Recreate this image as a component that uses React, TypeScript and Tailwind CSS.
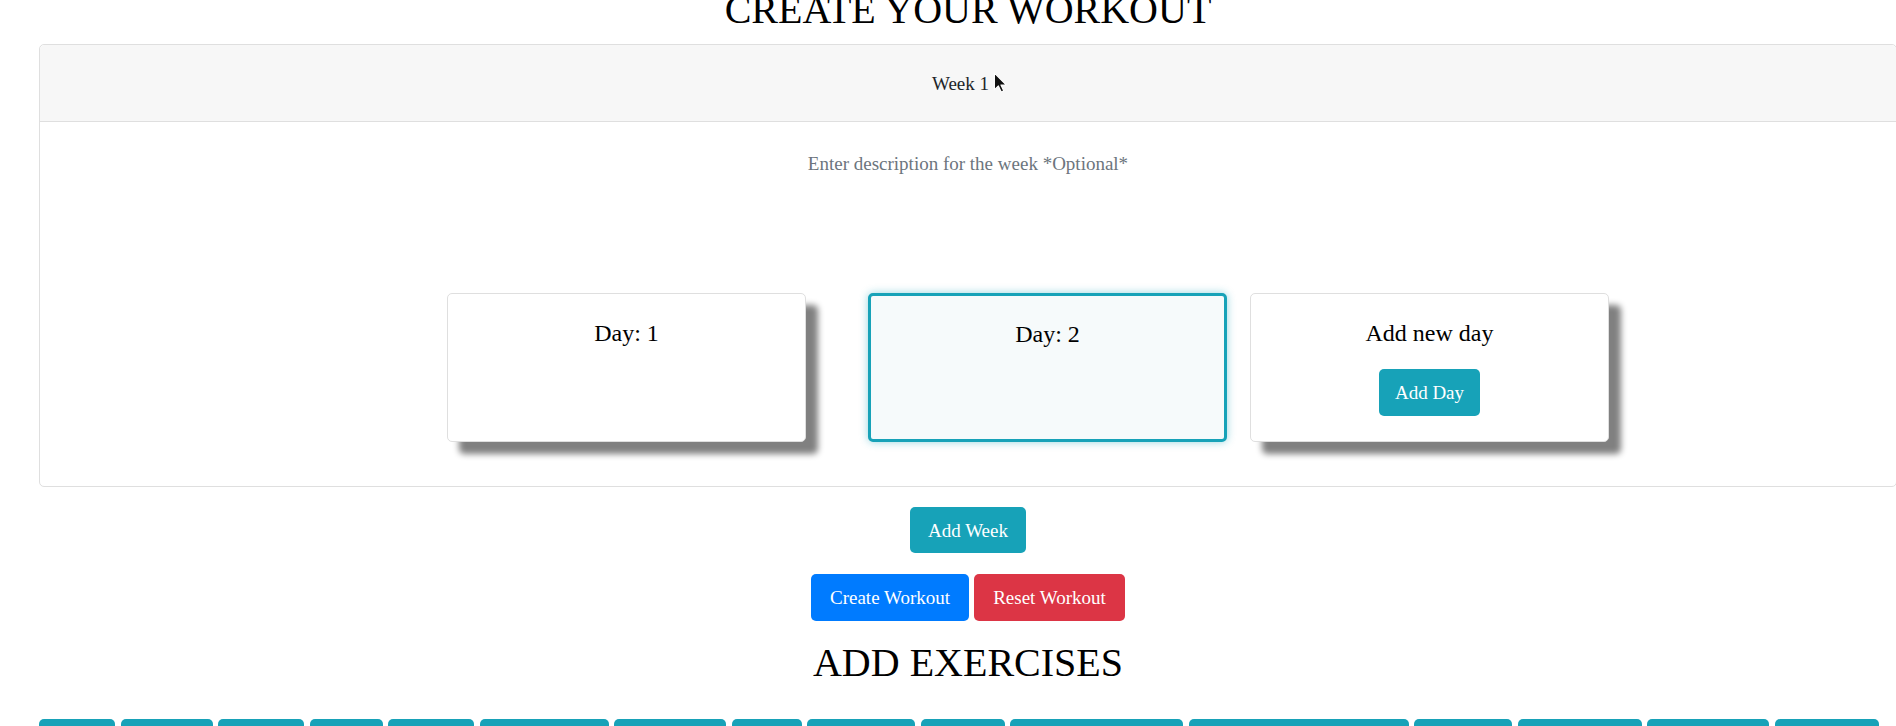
const exercises = [
  { label: "Chest", w: "w-[76px]" },
  { label: "Biceps", w: "w-[92px]" },
  { label: "Triceps", w: "w-[86px]" },
  { label: "Back", w: "w-[73px]" },
  { label: "Legs", w: "w-[86px]" },
  { label: "Shoulders", w: "w-[129px]" },
  { label: "Forearms", w: "w-[112px]" },
  { label: "Abs", w: "w-[70px]" },
  { label: "Glutes", w: "w-[108px]" },
  { label: "Calves", w: "w-[84px]" },
  { label: "Lower Back", w: "w-[173px]" },
  { label: "Cardio Exercises", w: "w-[220px]" },
  { label: "Traps", w: "w-[98px]" },
  { label: "Hamstrings", w: "w-[124px]" },
  { label: "Quadriceps", w: "w-[122px]" },
  { label: "Obliques", w: "w-[104px]" },
];

const Cursor = () => (
  <svg
    width="15"
    height="21"
    viewBox="0 0 13 19"
    className="absolute left-full top-[3px] ml-[4px]"
  >
    <path
      d="M1 1 L1 16 L4.6 12.6 L7.2 18 L9.4 17 L6.9 11.7 L11.6 11.7 Z"
      fill="#111"
      stroke="#fff"
      strokeWidth="1"
      strokeLinejoin="round"
    />
  </svg>
);

const App = () => {
  return (
    <div className="h-[726px] w-full overflow-hidden bg-white font-['Liberation_Serif',serif] text-[#212529]">
      <div className="w-[1936px] px-[39px]">
        <h1 className="mt-[-14px] mb-[10px] text-center text-[40px] leading-[48px] font-normal text-black">
          CREATE YOUR WORKOUT
        </h1>

        <div className="rounded-[5px] border border-[#dfdfdf]">
          <div className="flex h-[77px] items-center justify-center rounded-t-[5px] border-b border-[#dfdfdf] bg-[#f7f7f7]">
            <span className="relative mr-[15px] text-[19px] leading-[29px]">
              Week 1
              <Cursor />
            </span>
          </div>

          <div className="pt-[27px] pb-[44px]">
            <textarea
              className="block h-[144px] w-full resize-none bg-transparent text-center text-[19px] leading-[29px] placeholder:text-[#6c757d] focus:outline-none"
              placeholder="Enter description for the week *Optional*"
              rows={4}
            ></textarea>

            <div className="flex pl-[407px]">
              <div className="h-[149px] w-[359px] rounded-[5px] border border-[#dfdfdf] bg-white pt-[25px] text-center shadow-[12px_12px_6px_#808080]">
                <h5 className="text-[24px] leading-[29px] text-black">Day: 1</h5>
              </div>

              <div className="ml-[62px] h-[149px] w-[359px] rounded-[5px] border-[3px] border-[#17a2b8] bg-[#f6fafb] pt-[24px] text-center shadow-[0_0_8px_rgba(23,162,184,0.45)]">
                <h5 className="text-[24px] leading-[29px] text-black">Day: 2</h5>
              </div>

              <div className="ml-[23px] flex h-[149px] w-[359px] flex-col items-center rounded-[5px] border border-[#dfdfdf] bg-white pt-[25px] shadow-[12px_12px_6px_#808080]">
                <h5 className="text-[24px] leading-[29px] text-black">
                  Add new day
                </h5>
                <button className="mt-[21px] h-[47px] rounded-[5px] bg-[#17a2b8] px-[16px] text-[19px] leading-[29px] text-white">
                  Add Day
                </button>
              </div>
            </div>
          </div>
        </div>

        <div className="flex justify-center pt-[20px]">
          <button className="h-[46px] w-[116px] rounded-[5px] bg-[#17a2b8] text-[19px] leading-[29px] text-white">
            Add Week
          </button>
        </div>

        <div className="flex justify-center gap-[5px] pt-[21px]">
          <button className="h-[47px] w-[158px] rounded-[5px] bg-[#007bff] text-[19px] leading-[29px] text-white">
            Create Workout
          </button>
          <button className="h-[47px] w-[151px] rounded-[5px] bg-[#dc3545] text-[19px] leading-[29px] text-white">
            Reset Workout
          </button>
        </div>

        <h1 className="mt-[18px] text-center text-[40px] leading-[48px] font-normal text-black">
          ADD EXERCISES
        </h1>

        <div className="mt-[32px] flex gap-[5.5px]">
          {exercises.map((ex) => (
            <button
              key={ex.label}
              className={`${ex.w} h-[47px] shrink-0 overflow-hidden whitespace-nowrap rounded-[5px] bg-[#17a2b8] text-[19px] leading-[29px] text-white`}
            >
              {ex.label}
            </button>
          ))}
        </div>
      </div>
    </div>
  );
};

export default App;
